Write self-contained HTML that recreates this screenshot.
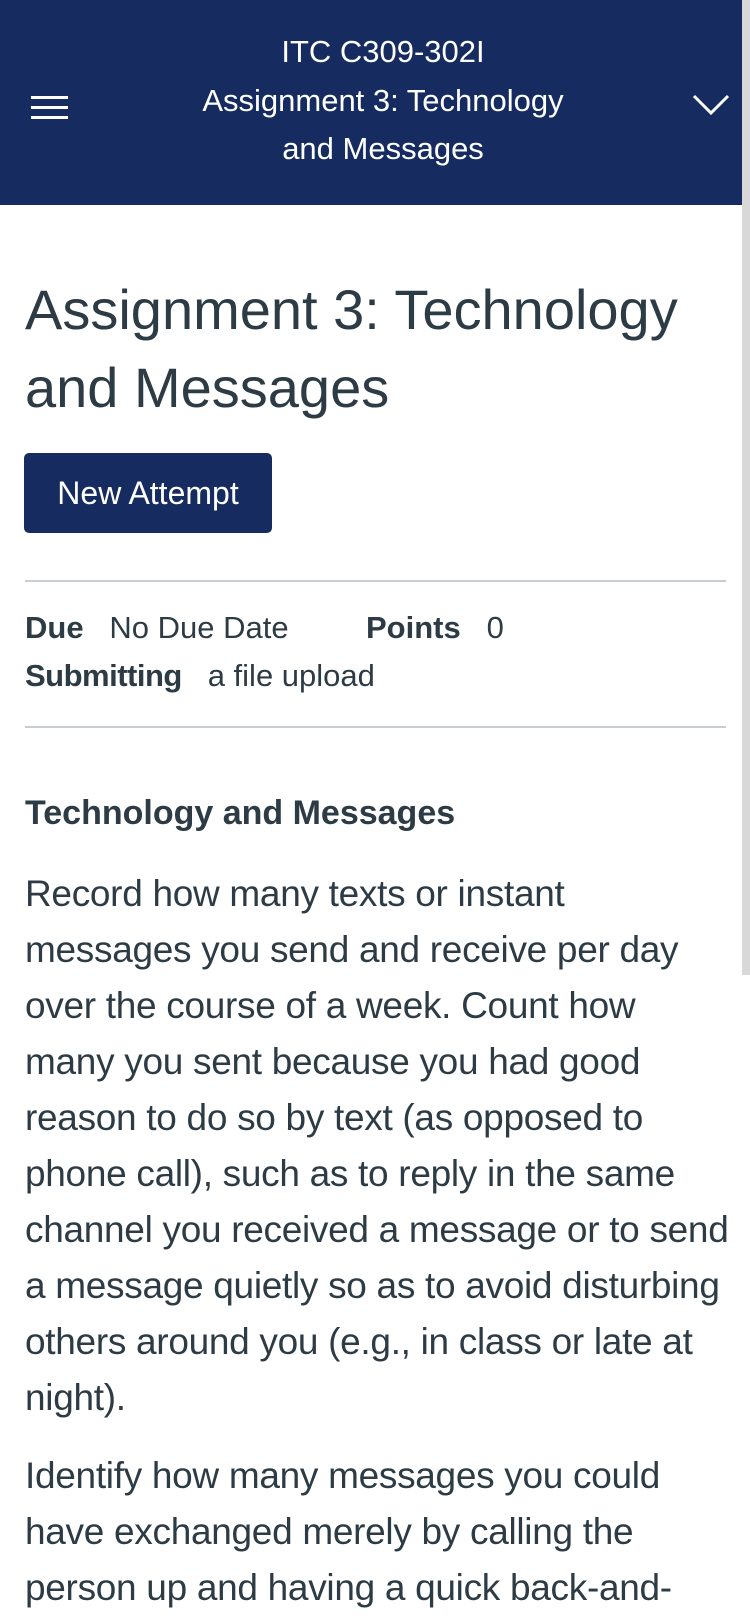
<!DOCTYPE html>
<html><head><style>
body{margin:0;width:750px;height:1624px;overflow:hidden;background:#fff;font-family:"Liberation Sans",sans-serif;color:#2d3b45;position:relative}
.hdr{position:absolute;left:0;top:0;width:742px;height:205px;background:#162c61;color:#fff}
.ht{position:absolute;left:0;width:766px;text-align:center;font-size:31px;white-space:nowrap}
.sb{position:absolute;left:742px;top:0;width:8px;height:975px;background:#d8d8d8}
.l{position:absolute;left:25px;white-space:nowrap}
.p{font-size:37px;letter-spacing:-0.3px}
hr{position:absolute;left:25px;width:701px;margin:0;border:0;border-top:2px solid #c7cdd1}
</style></head><body>
<div class="hdr">
<div class="ht" style="top:34px">ITC C309-302I</div>
<div class="ht" style="top:83px">Assignment 3: Technology</div>
<div class="ht" style="top:131px">and Messages</div>
<div style="position:absolute;left:31px;top:96px;width:37px;height:3px;background:#fff"></div>
<div style="position:absolute;left:31px;top:106px;width:37px;height:3px;background:#fff"></div>
<div style="position:absolute;left:31px;top:116px;width:37px;height:3px;background:#fff"></div>
<svg style="position:absolute;left:692px;top:92px" width="38" height="26"><path d="M2 4 L19 21 L36 4" stroke="#fff" stroke-width="3" fill="none"/></svg>
</div>
<div class="sb"></div>
<div class="l" style="top:277px;font-size:56px">Assignment 3: Technology</div>
<div class="l" style="top:355px;font-size:56px">and Messages</div>
<div style="position:absolute;left:24px;top:453px;width:248px;height:80px;background:#162c61;border-radius:5px;color:#fff;font-size:32px;line-height:80px;text-align:center">New Attempt</div>
<hr style="top:580px">
<div class="l" style="top:610px;font-size:31px"><b>Due</b>&nbsp;&nbsp; No Due Date</div>
<div class="l" style="left:366px;top:610px;font-size:31px"><b>Points</b>&nbsp;&nbsp; 0</div>
<div class="l" style="top:658px;font-size:31px"><b style="letter-spacing:-0.5px">Submitting</b>&nbsp;&nbsp; a file upload</div>
<hr style="top:726px">
<div class="l" style="top:794px;font-size:34px;font-weight:bold">Technology and Messages</div>
<div class="l p" style="top:873px">Record how many texts or instant</div>
<div class="l p" style="top:929px">messages you send and receive per day</div>
<div class="l p" style="top:985px">over the course of a week. Count how</div>
<div class="l p" style="top:1041px">many you sent because you had good</div>
<div class="l p" style="top:1097px">reason to do so by text (as opposed to</div>
<div class="l p" style="top:1153px">phone call), such as to reply in the same</div>
<div class="l p" style="top:1209px">channel you received a message or to send</div>
<div class="l p" style="top:1265px">a message quietly so as to avoid disturbing</div>
<div class="l p" style="top:1321px">others around you (e.g., in class or late at</div>
<div class="l p" style="top:1377px">night).</div>
<div class="l p" style="top:1455px">Identify how many messages you could</div>
<div class="l p" style="top:1511px">have exchanged merely by calling the</div>
<div class="l p" style="top:1567px">person up and having a quick back-and-</div>
</body></html>
